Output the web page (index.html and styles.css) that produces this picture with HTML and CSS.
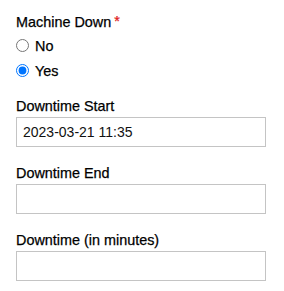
FILE: index.html
```html
<!DOCTYPE html>
<html lang="en">
<head>
    <meta charset="UTF-8">
    <meta name="viewport" content="width=device-width, initial-scale=1.0">
    <title>Machine Downtime</title>
    <link rel="stylesheet" href="styles.css">
</head>
<body>
    <form class="downtime-form">
        <fieldset class="form-group choice-group">
            <legend class="field-label">Machine Down<span class="required">*</span></legend>
            <label class="radio-row">
                <input type="radio" name="machineDown" value="no">
                <span>No</span>
            </label>
            <label class="radio-row">
                <input type="radio" name="machineDown" value="yes" checked>
                <span>Yes</span>
            </label>
        </fieldset>

        <div class="form-group">
            <label class="field-label" for="downtimeStart">Downtime Start</label>
            <input type="text" id="downtimeStart" class="text-input" value="2023-03-21 11:35">
        </div>

        <div class="form-group">
            <label class="field-label" for="downtimeEnd">Downtime End</label>
            <input type="text" id="downtimeEnd" class="text-input">
        </div>

        <div class="form-group">
            <label class="field-label" for="downtimeMinutes">Downtime (in minutes)</label>
            <input type="text" id="downtimeMinutes" class="text-input">
        </div>
    </form>
</body>
</html>
```

FILE: styles.css
```css
body {
    font-family: "Liberation Sans", Arial, sans-serif;
    font-size: 14px;
    color: #000;
    background: #fff;
    margin: 0;
}

.downtime-form {
    padding: 13px 18px 0 16px;
}

.form-group {
    margin: 0 0 17px 0;
    padding: 0;
    border: none;
}

.choice-group {
    margin-bottom: 14px;
}

.field-label {
    display: block;
    padding: 0;
    font-size: 14.4px;
    line-height: 18px;
    margin-bottom: 2px;
    color: #000;
    -webkit-text-stroke: 0.25px #000;
}

.required {
    color: #e01b1b;
    -webkit-text-stroke: 0.25px #e01b1b;
    margin-left: 3px;
    position: relative;
    top: -1px;
}

.radio-row {
    display: flex;
    align-items: center;
    gap: 6px;
    height: 25px;
    font-size: 14.4px;
    -webkit-text-stroke: 0.25px #000;
}

.radio-row input {
    margin: 0;
    width: 13px;
    height: 13px;
}

.text-input {
    box-sizing: border-box;
    width: 100%;
    height: 30px;
    padding: 0 6px;
    border: 1px solid #c4c4c4;
    border-radius: 0;
    font-family: inherit;
    font-size: 14px;
    color: #111;
    outline: none;
}
```
